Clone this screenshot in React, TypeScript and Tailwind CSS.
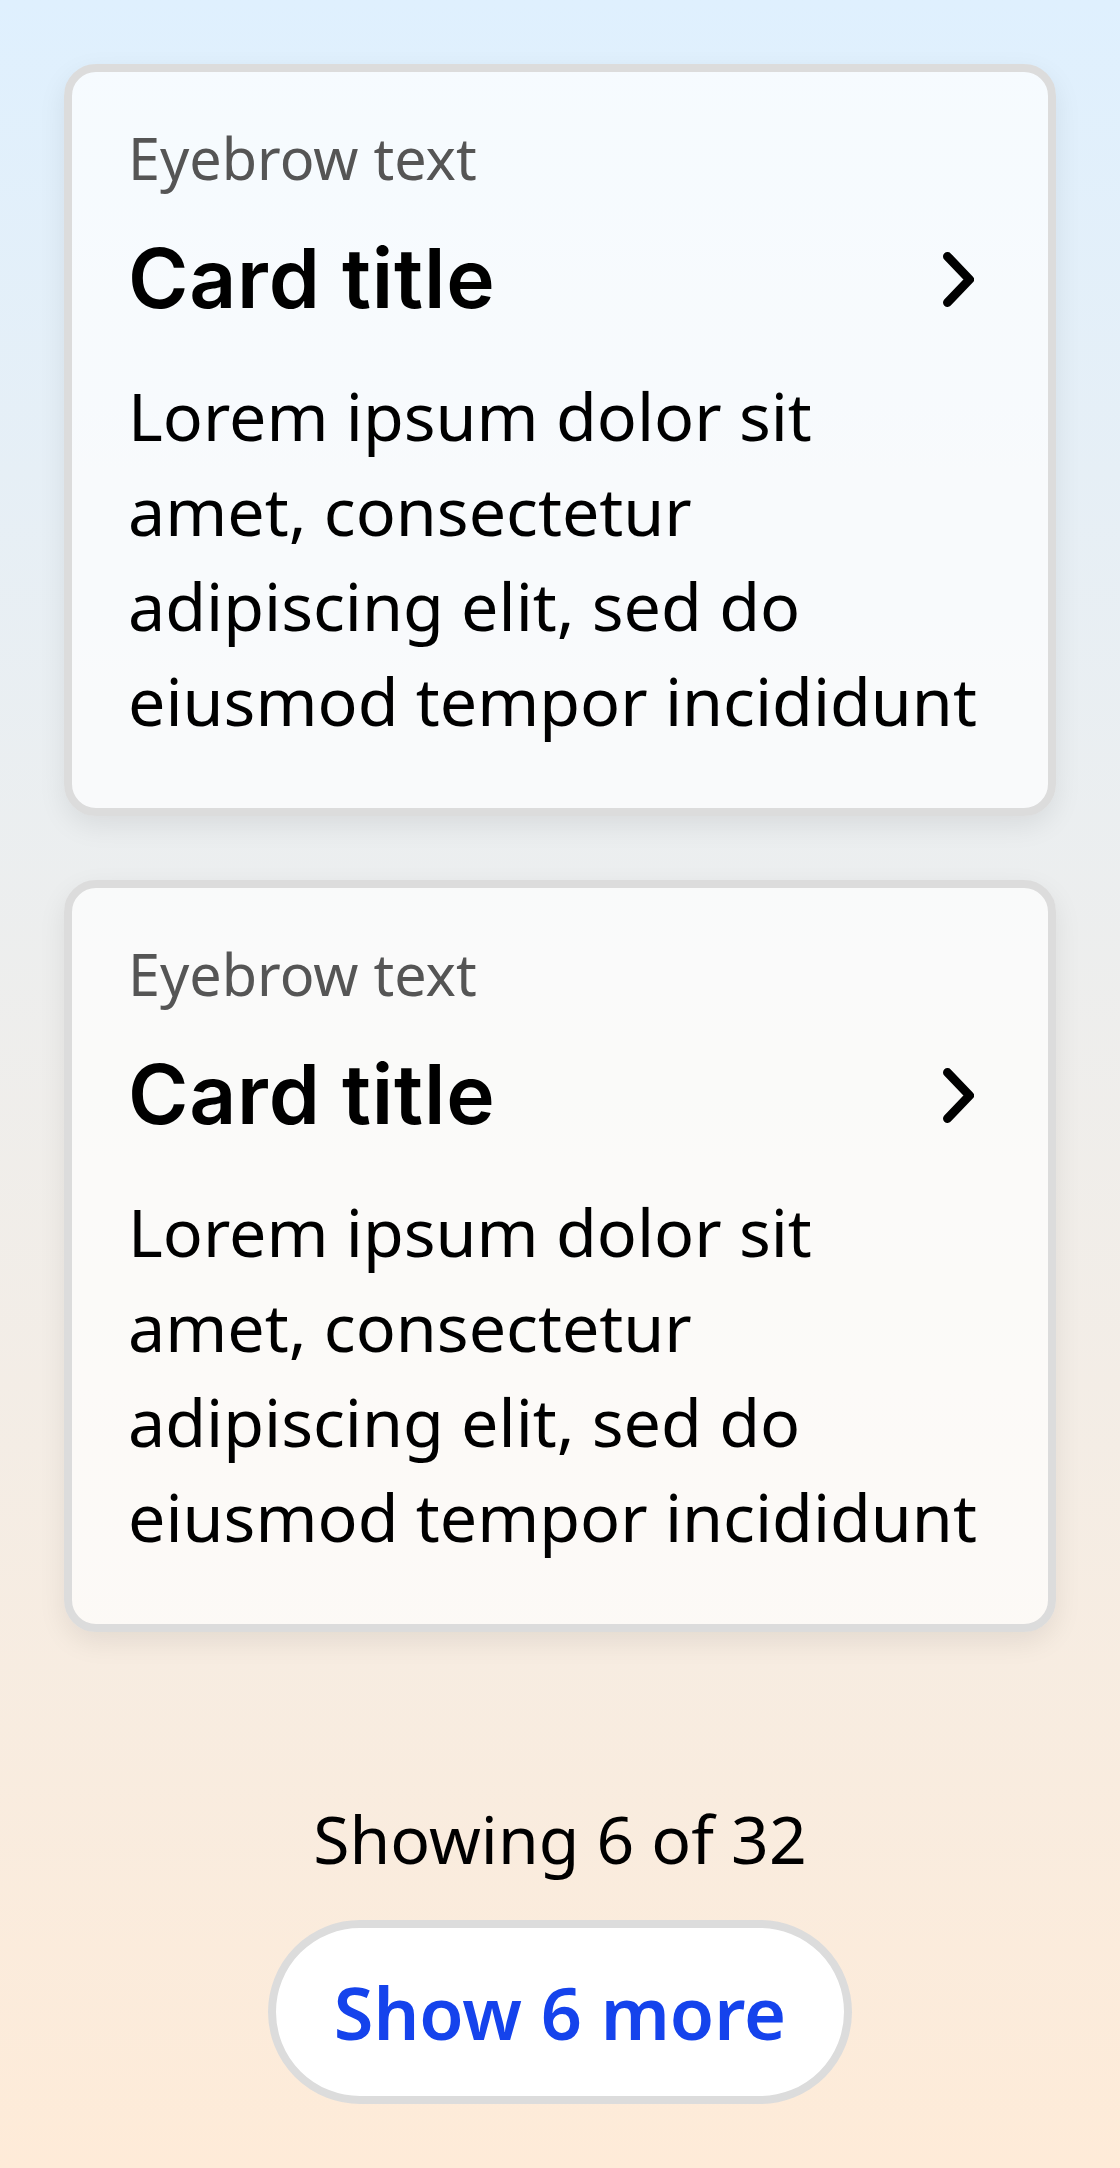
import React from 'react'

type CardProps = {
  eyebrow: string
  title: string
  body: string
}

function ChevronRight() {
  return (
    <svg width="31" height="55" viewBox="0 0 31 55" fill="none" aria-hidden="true" className="mr-[18px] shrink-0">
      <polyline
        points="4.5,4.5 26.5,27.5 4.5,50.5"
        stroke="#000"
        strokeWidth="9"
        strokeLinecap="round"
        strokeLinejoin="round"
      />
    </svg>
  )
}

function Card({ eyebrow, title, body }: CardProps) {
  return (
    <div className="rounded-[32px] border-[8px] border-[#dcdcdc] bg-white/70 px-[56px] pt-[46px] pb-[60px] shadow-[0_10px_28px_rgba(0,0,0,0.08)]">
      <p className="font-['Noto_Sans',sans-serif] text-[57.5px] leading-[80px] text-[#555]">{eyebrow}</p>
      <div className="mt-[33px] flex items-center justify-between">
        <h2 className="font-['Inter',sans-serif] text-[82px] leading-[96px] font-semibold tracking-[0.8px] text-black">
          {title}
        </h2>
        <ChevronRight />
      </div>
      <p className="mt-[41px] font-['Noto_Sans',sans-serif] text-[66.4px] leading-[95px] text-black">{body}</p>
    </div>
  )
}

const cards: CardProps[] = [
  {
    eyebrow: 'Eyebrow text',
    title: 'Card title',
    body: 'Lorem ipsum dolor sit amet, consectetur adipiscing elit, sed do eiusmod tempor incididunt',
  },
  {
    eyebrow: 'Eyebrow text',
    title: 'Card title',
    body: 'Lorem ipsum dolor sit amet, consectetur adipiscing elit, sed do eiusmod tempor incididunt',
  },
]

export default function App() {
  return (
    <div className="min-h-[2168px] w-full bg-gradient-to-b from-[#dff0fe] to-[#feebd8] px-[64px] pt-[64px] pb-[64px]">
      <div className="flex flex-col gap-[64px]">
        {cards.map((c, i) => (
          <Card key={i} {...c} />
        ))}
      </div>

      <div className="mt-[159px] flex flex-col items-center">
        <p className="font-['Noto_Sans',sans-serif] text-[66px] leading-[95px] text-black">Showing 6 of 32</p>
        <button className="mt-[34px] flex h-[184px] w-[584px] items-center justify-center rounded-full border-[8px] border-[#dcdcdc] bg-white font-['Noto_Sans',sans-serif] text-[72px] font-semibold text-[#1543ec]">
          Show 6 more
        </button>
      </div>
    </div>
  )
}
